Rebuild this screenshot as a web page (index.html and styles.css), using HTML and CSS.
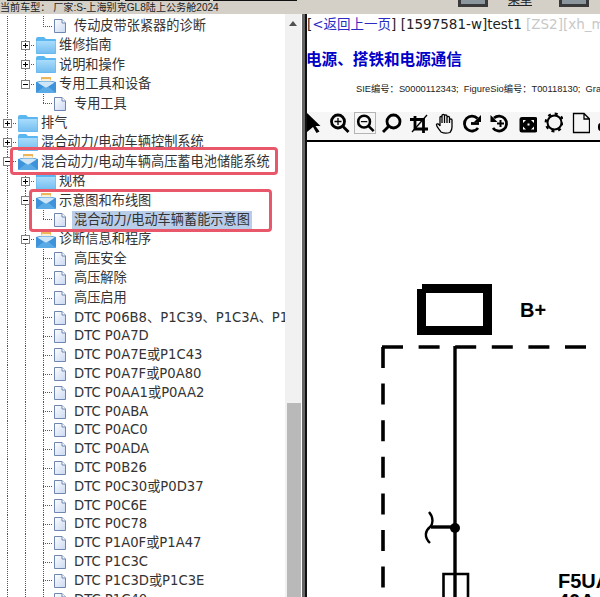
FILE: index.html
```html
<!DOCTYPE html>
<html lang="zh-CN">
<head>
  <meta charset="UTF-8">
  <title>电源、搭铁和电源通信</title>
  <link rel="stylesheet" href="styles.css">
</head>
<body>
  <svg class="defs" width="0" height="0">
    <defs>
      <linearGradient id="folder-fill" x1="0" y1="0" x2="0" y2="1">
        <stop offset="0" stop-color="#a9dcfb"/>
        <stop offset="1" stop-color="#74bdf0"/>
      </linearGradient>
      <linearGradient id="leaf-fill" x1="0" y1="0" x2="1" y2="1">
        <stop offset="0" stop-color="#ffffff"/>
        <stop offset="1" stop-color="#c9d8f2"/>
      </linearGradient>
      <symbol id="folder" viewBox="0 0 20 17">
        <path d="M0 2 Q0 0 2 0 H8 L10 2 H19 Q20 2 20 3 V16 Q20 17 19 17 H1 Q0 17 0 16Z" fill="#5ab6f0"/>
        <rect x="0.5" y="4" width="19" height="12.5" fill="url(#folder-fill)"/>
      </symbol>
      <symbol id="open" viewBox="0 0 20 17">
        <path d="M5 6 V1 H15 V6Z" fill="#eeb65a"/>
        <path d="M4 7 L6 3 H14 L16 7Z" fill="#f7efd8"/>
        <path d="M0 6 L4 5 H16 L20 6 V16 Q20 17 19 17 H1 Q0 17 0 16Z" fill="#3f93da"/>
        <path d="M1.5 6.5 L10 12 L18.5 6.5 L15 5.5 H5Z" fill="#cfe6f8"/>
        <path d="M0 17 L8 10.5 L10 12 L12 10.5 L20 17Z" fill="#5aaae6"/>
      </symbol>
      <symbol id="leaf" viewBox="0 0 12 14">
        <path d="M0.5 0.5 H8 L11.5 4 V13.5 H0.5Z" fill="url(#leaf-fill)" stroke="#6f86b0"/>
        <path d="M8 0.5 V4 H11.5" fill="#fff" stroke="#6f86b0"/>
      </symbol>
    </defs>
  </svg>

  <header class="topbar">
    <div class="car-info">当前车型： 厂家:S-上海别克GL8陆上公务舱2024</div>
    <div class="top-tools">
      <div class="top-btn"></div>
      <div class="top-menu">菜单</div>
      <div class="top-btn"></div>
    </div>
  </header>

  <main class="main">
    <nav class="tree">
      <div class="rows">
        <div class="row"><span class="c v"></span><span class="c v"></span><span class="c l"></span><svg class="leaf"><use href="#leaf"/></svg><span class="label">传动皮带张紧器的诊断</span></div>
        <div class="row"><span class="c v"></span><span class="c h"><i class="box plus"></i></span><svg class="folder"><use href="#folder"/></svg><span class="label">维修指南</span></div>
        <div class="row"><span class="c v"></span><span class="c h"><i class="box plus"></i></span><svg class="folder"><use href="#folder"/></svg><span class="label">说明和操作</span></div>
        <div class="row"><span class="c v"></span><span class="c l"><i class="box minus"></i></span><svg class="folder"><use href="#open"/></svg><span class="label">专用工具和设备</span></div>
        <div class="row"><span class="c v"></span><span class="c"></span><span class="c l"></span><svg class="leaf"><use href="#leaf"/></svg><span class="label">专用工具</span></div>
        <div class="row"><span class="c h"><i class="box plus"></i></span><svg class="folder"><use href="#folder"/></svg><span class="label">排气</span></div>
        <div class="row"><span class="c h"><i class="box plus"></i></span><svg class="folder"><use href="#folder"/></svg><span class="label">混合动力/电动车辆控制系统</span></div>
        <div class="row"><span class="c h"><i class="box minus"></i></span><svg class="folder"><use href="#open"/></svg><span class="label">混合动力/电动车辆高压蓄电池储能系统</span></div>
        <div class="row"><span class="c v"></span><span class="c h"><i class="box plus"></i></span><svg class="folder"><use href="#folder"/></svg><span class="label">规格</span></div>
        <div class="row"><span class="c v"></span><span class="c h"><i class="box minus"></i></span><svg class="folder"><use href="#open"/></svg><span class="label">示意图和布线图</span></div>
        <div class="row"><span class="c v"></span><span class="c v"></span><span class="c l"></span><svg class="leaf"><use href="#leaf"/></svg><span class="label selected">混合动力/电动车辆蓄能示意图</span></div>
        <div class="row"><span class="c v"></span><span class="c h"><i class="box minus"></i></span><svg class="folder"><use href="#open"/></svg><span class="label">诊断信息和程序</span></div>
        <div class="row"><span class="c v"></span><span class="c v"></span><span class="c h"></span><svg class="leaf"><use href="#leaf"/></svg><span class="label">高压安全</span></div>
        <div class="row"><span class="c v"></span><span class="c v"></span><span class="c h"></span><svg class="leaf"><use href="#leaf"/></svg><span class="label">高压解除</span></div>
        <div class="row row-last-cn"><span class="c v"></span><span class="c v"></span><span class="c h"></span><svg class="leaf"><use href="#leaf"/></svg><span class="label">高压启用</span></div>
        <div class="row dtc"><span class="c v"></span><span class="c v"></span><span class="c h"></span><svg class="leaf"><use href="#leaf"/></svg><span class="label">DTC P06B8、P1C39、P1C3A、P1C3B</span></div>
        <div class="row dtc"><span class="c v"></span><span class="c v"></span><span class="c h"></span><svg class="leaf"><use href="#leaf"/></svg><span class="label">DTC P0A7D</span></div>
        <div class="row dtc"><span class="c v"></span><span class="c v"></span><span class="c h"></span><svg class="leaf"><use href="#leaf"/></svg><span class="label">DTC P0A7E或P1C43</span></div>
        <div class="row dtc"><span class="c v"></span><span class="c v"></span><span class="c h"></span><svg class="leaf"><use href="#leaf"/></svg><span class="label">DTC P0A7F或P0A80</span></div>
        <div class="row dtc"><span class="c v"></span><span class="c v"></span><span class="c h"></span><svg class="leaf"><use href="#leaf"/></svg><span class="label">DTC P0AA1或P0AA2</span></div>
        <div class="row dtc"><span class="c v"></span><span class="c v"></span><span class="c h"></span><svg class="leaf"><use href="#leaf"/></svg><span class="label">DTC P0ABA</span></div>
        <div class="row dtc"><span class="c v"></span><span class="c v"></span><span class="c h"></span><svg class="leaf"><use href="#leaf"/></svg><span class="label">DTC P0AC0</span></div>
        <div class="row dtc"><span class="c v"></span><span class="c v"></span><span class="c h"></span><svg class="leaf"><use href="#leaf"/></svg><span class="label">DTC P0ADA</span></div>
        <div class="row dtc"><span class="c v"></span><span class="c v"></span><span class="c h"></span><svg class="leaf"><use href="#leaf"/></svg><span class="label">DTC P0B26</span></div>
        <div class="row dtc"><span class="c v"></span><span class="c v"></span><span class="c h"></span><svg class="leaf"><use href="#leaf"/></svg><span class="label">DTC P0C30或P0D37</span></div>
        <div class="row dtc"><span class="c v"></span><span class="c v"></span><span class="c h"></span><svg class="leaf"><use href="#leaf"/></svg><span class="label">DTC P0C6E</span></div>
        <div class="row dtc"><span class="c v"></span><span class="c v"></span><span class="c h"></span><svg class="leaf"><use href="#leaf"/></svg><span class="label">DTC P0C78</span></div>
        <div class="row dtc"><span class="c v"></span><span class="c v"></span><span class="c h"></span><svg class="leaf"><use href="#leaf"/></svg><span class="label">DTC P1A0F或P1A47</span></div>
        <div class="row dtc"><span class="c v"></span><span class="c v"></span><span class="c h"></span><svg class="leaf"><use href="#leaf"/></svg><span class="label">DTC P1C3C</span></div>
        <div class="row dtc"><span class="c v"></span><span class="c v"></span><span class="c h"></span><svg class="leaf"><use href="#leaf"/></svg><span class="label">DTC P1C3D或P1C3E</span></div>
        <div class="row dtc"><span class="c v"></span><span class="c v"></span><span class="c h"></span><svg class="leaf"><use href="#leaf"/></svg><span class="label">DTC P1C40</span></div>
      </div>
      <div class="mark mark-system"></div>
      <div class="mark mark-diagram"></div>
    </nav>

    <div class="scrollbar">
      <div class="scroll-up"></div>
      <div class="scroll-thumb"></div>
    </div>
    <div class="divider"></div>

    <section class="doc">
      <div class="crumbs">[<a class="back" href="#">&lt;返回上一页</a>] [1597581-w]test1 <span class="tag">[ZS2][xh_mode]</span></div>
      <h3 class="doc-title">电源、搭铁和电源通信</h3>
      <div class="doc-meta">SIE编号：S0000112343;&nbsp; FigureSio编号：T00118130;&nbsp; GraphicID：</div>

      <div class="toolbar">
        <svg class="tool tool-arrow" viewBox="0 0 16 22"><path d="M0 1 L13.5 14 H8.5 L12.5 19.5 L9.5 21 L6 15 L0 20Z"/></svg>
        <svg class="tool" viewBox="0 0 22 22"><g class="stroke"><circle cx="10" cy="9.5" r="6.5"/><path d="M15 14.5 L20.5 20"/></g><path class="thin" d="M6.5 9.5 H13.5 M10 6 V13"/></svg>
        <svg class="tool active" viewBox="0 0 22 22"><g class="stroke"><circle cx="10" cy="9.5" r="6.5"/><path d="M15 14.5 L20.5 20"/></g><path class="thin" d="M6.5 9.5 H13.5"/></svg>
        <svg class="tool" viewBox="0 0 22 22"><g class="stroke"><circle cx="12.5" cy="9.5" r="6.5"/><path d="M7.5 14.5 L2 20"/></g></svg>
        <svg class="tool" viewBox="0 0 22 22"><g class="stroke"><path d="M7 4 V17 H20"/><path d="M2 7.5 H15.5 V21"/></g><path class="thin" d="M4 20 L19 3"/></svg>
        <svg class="tool" viewBox="0 0 22 22"><path class="thin" d="M7 20 C5 17 2 14 2.5 12.5 C3 11 5 12 6 14 V5.5 C6 4 8 4 8 5.5 V3.5 C8 2 10.5 2 10.5 3.5 V4 C10.5 2.5 13 2.5 13 4 V5.5 C13 4 15.5 4 15.5 5.5 V8 C15.5 6.5 18 6.5 18 8 V15 C18 18 17 19 16 20.5 Q11 22 7 20Z M8 5.5 V11 M10.5 4 V11 M13 5.5 V11 M15.5 8 V11"/></svg>
        <svg class="tool" viewBox="0 0 22 22"><g class="stroke"><path d="M16.5 6.5 A7.5 7.5 0 1 0 17 16"/><path d="M10 11.5 H18"/></g><path d="M20 3 V10 H13Z"/></svg>
        <svg class="tool" viewBox="0 0 22 22"><g class="stroke"><path d="M6 6 A7.5 7.5 0 1 1 5 16"/></g><path d="M2.5 3 V10 H9.5Z"/><path class="thin plus-bold" d="M9 11.5 H16 M12.5 8 V15"/></svg>
        <svg class="tool" viewBox="0 0 22 22"><rect x="4.5" y="5" width="18" height="15.5" rx="2.5"/><path fill="#fff" d="M8 8 H11 L8 11Z M19 8 H16 L19 11Z M8 17.5 H11 L8 14.5Z M19 17.5 H16 L19 14.5Z M12.5 11.5 H14.5 V13.5 H12.5Z"/></svg>
        <svg class="tool" viewBox="0 0 22 22"><circle class="gear-ring" cx="13.5" cy="10.5" r="7"/><circle class="gear-teeth" cx="13.5" cy="10.5" r="8.8"/></svg>
        <svg class="tool" viewBox="0 0 22 22"><path class="thin" d="M5.5 1.5 H16 L21.5 7 V20.5 H5.5Z M16 1.5 V7 H21.5"/></svg>
        <svg class="tool" viewBox="0 0 22 22"><rect x="3" y="11" width="16" height="8" rx="3"/></svg>
      </div>

      <svg class="diagram" viewBox="307 142 293 455">
        <path class="terminal" d="M422 284 H492 V335 H417 V289 H422Z M426 293 V326 H483 V293Z"/>
        <text class="dia-label" x="520" y="317">B+</text>
        <path class="dash" d="M382 347 H620"/>
        <path class="dash" d="M383 347 V600"/>
        <path class="wire" d="M455 346 V597"/>
        <circle cx="455" cy="528" r="5"/>
        <path class="wire" d="M455 527 H431"/>
        <path class="wire wire-curve" d="M429 512 C434 518 433 524 430 527 C425 531 424 537 430 543"/>
        <path class="wire fuse" d="M443.5 597 V574 H468 V597"/>
        <text class="dia-label" x="558" y="588">F5UA</text>
        <text class="dia-label" x="558" y="608">40A</text>
      </svg>
    </section>
  </main>
</body>
</html>
```

FILE: styles.css
```css
* {
  box-sizing: border-box;
}
html, body {
  margin: 0;
  height: 100%;
  overflow: hidden;
}
body {
  display: flex;
  flex-direction: column;
  background: #fff;
  color: #333;
  font-family: "DejaVu Sans", "Noto Sans CJK SC", sans-serif;
  font-size: 13.2px;
}
.defs {
  position: absolute;
}

/* top strip */
.topbar {
  display: flex;
  justify-content: space-between;
  height: 14px;
  padding-right: 11px;
  overflow: hidden;
  background:
    linear-gradient(#111, #111) 7px 0 / 113px 1px no-repeat,
    linear-gradient(#111, #111) 125px 0 / 85px 1px no-repeat,
    linear-gradient(#111, #111) 213px 0 / 84px 1px no-repeat,
    #d4d0c8;
}
.car-info {
  padding-top: 2px;
  font-family: "Liberation Sans", "Noto Sans CJK SC", sans-serif;
  font-size: 10.1px;
  line-height: 12px;
  color: #222;
  white-space: nowrap;
}
.top-tools {
  display: flex;
  align-items: flex-start;
}
.top-btn {
  width: 30px;
  height: 7px;
  background: #8b979c;
  border: solid #3a3a3a;
  border-width: 0 3px 3px;
}
.top-menu {
  margin: -7px 27px 0 20px;
  font-family: "Liberation Sans", "Noto Sans CJK SC", sans-serif;
  font-size: 12px;
  line-height: 14px;
  color: #222;
  text-decoration: underline;
}

.main {
  display: flex;
  flex: 1;
  min-height: 0;
}

/* tree */
.tree {
  position: relative;
  width: 285px;
  overflow: hidden;
}
.rows {
  margin-left: -2px;
  padding-top: 2.4px;
}
.row {
  display: flex;
  align-items: center;
  height: 19.4px;
  white-space: nowrap;
}
.row-last-cn {
  height: 20.4px;
}
.dtc {
  height: 18.8px;
}
.c {
  flex: none;
  align-self: stretch;
  width: 18px;
  display: flex;
  align-items: center;
  background-repeat: no-repeat;
}
.v {
  background-image: repeating-linear-gradient(#555 0 1px, transparent 1px 2px);
  background-size: 1px 100%;
  background-position: 9px 0;
}
.h, .l {
  background-image:
    repeating-linear-gradient(#555 0 1px, transparent 1px 2px),
    repeating-linear-gradient(90deg, #555 0 1px, transparent 1px 2px);
  background-size: 1px 100%, 9px 1px;
  background-position: 9px 0, 9px 50%;
}
.l {
  background-size: 1px 50%, 9px 1px;
}
.box {
  position: relative;
  width: 9px;
  height: 9px;
  margin-left: 5px;
  border: 1px solid #808080;
  background: #fff;
}
.plus {
  background:
    linear-gradient(#000, #000) center / 5px 1px no-repeat,
    linear-gradient(#000, #000) center / 1px 5px no-repeat,
    #fff;
}
.minus {
  background:
    linear-gradient(#000, #000) center / 5px 1px no-repeat,
    #fff;
}
.folder {
  flex: none;
  width: 20px;
  height: 17px;
  margin-left: 2px;
}
.leaf {
  flex: none;
  width: 12px;
  height: 14px;
  margin-left: 2px;
}
.label {
  margin-left: 1px;
  padding: 0 2px;
  line-height: 18px;
}
.leaf + .label {
  margin-left: 6px;
}
.selected {
  background: #b9cde8;
}

/* red marks drawn over the screenshot */
.mark {
  position: absolute;
  border: 3px solid #e9576b;
  border-radius: 4px;
}
.mark-system {
  left: 10px;
  top: 133px;
  width: 268px;
  height: 28px;
}
.mark-diagram {
  left: 29px;
  top: 175px;
  width: 243px;
  height: 43px;
}

/* scrollbar + divider */
.scrollbar {
  flex: none;
  width: 16px;
  display: flex;
  flex-direction: column;
  justify-content: space-between;
  background: #f1f1f1;
}
.scroll-up {
  width: 0;
  height: 0;
  margin: 7px 0 0 4px;
  border: solid transparent;
  border-width: 0 4px 5px;
  border-bottom-color: #505050;
}
.scroll-thumb {
  width: 14px;
  height: 194px;
  margin-left: 2px;
  background: #b9b9b9;
}
.divider {
  flex: none;
  width: 6px;
  border-left: 1px solid #fff;
  background: linear-gradient(90deg, #666 0 3px, #111 3px);
}

/* document pane */
.doc {
  flex: 1;
  min-width: 0;
  overflow: hidden;
  white-space: nowrap;
}
.crumbs {
  height: 20px;
  padding-top: 1px;
  font-size: 13.5px;
  line-height: 18px;
  color: #222;
}
.back {
  color: #2b2bc4;
  text-decoration: none;
}
.tag {
  color: #c8c8c8;
}
.doc-title {
  margin: 14px 0 0 -1px;
  height: 20px;
  font-family: "Noto Sans CJK SC", sans-serif;
  font-size: 15.6px;
  line-height: 20px;
  font-weight: 700;
  color: #0000c8;
}
.doc-meta {
  margin-top: 13px;
  padding-left: 49px;
  height: 16px;
  font-family: "Liberation Sans", "Noto Sans CJK SC", sans-serif;
  font-size: 9.3px;
  line-height: 16px;
  color: #222;
}
.toolbar {
  display: flex;
  gap: 4.7px;
  align-items: flex-start;
  height: 30px;
  margin-top: 15px;
  background: #f6f6f6;
  border-bottom: 2px solid #000;
}
.tool {
  flex: none;
  width: 22px;
  height: 22px;
  fill: #000;
}
.tool-arrow {
  width: 16px;
}
.tool.active {
  border: 1px solid #b5b5b5;
}
.stroke {
  fill: none;
  stroke: #000;
  stroke-width: 2.8;
}
.thin {
  fill: none;
  stroke: #000;
  stroke-width: 1.3;
}
.plus-bold {
  stroke-width: 2;
}
.gear-ring {
  fill: none;
  stroke: #000;
  stroke-width: 2;
}
.gear-teeth {
  fill: none;
  stroke: #000;
  stroke-width: 2.2;
  stroke-dasharray: 3 3.9;
}

/* wiring diagram */
.diagram {
  display: block;
  width: 293px;
  height: 455px;
  background: #fff;
}
.terminal {
  fill: #000;
  fill-rule: evenodd;
}
.dash {
  fill: none;
  stroke: #000;
  stroke-width: 3.6;
  stroke-dasharray: 21 15.6;
}
.wire {
  fill: none;
  stroke: #000;
  stroke-width: 3.4;
}
.wire-curve {
  stroke-width: 2.4;
}
.fuse {
  stroke-width: 2.6;
}
.dia-label {
  font-family: "Liberation Sans", sans-serif;
  font-size: 20px;
  font-weight: 700;
}
```
